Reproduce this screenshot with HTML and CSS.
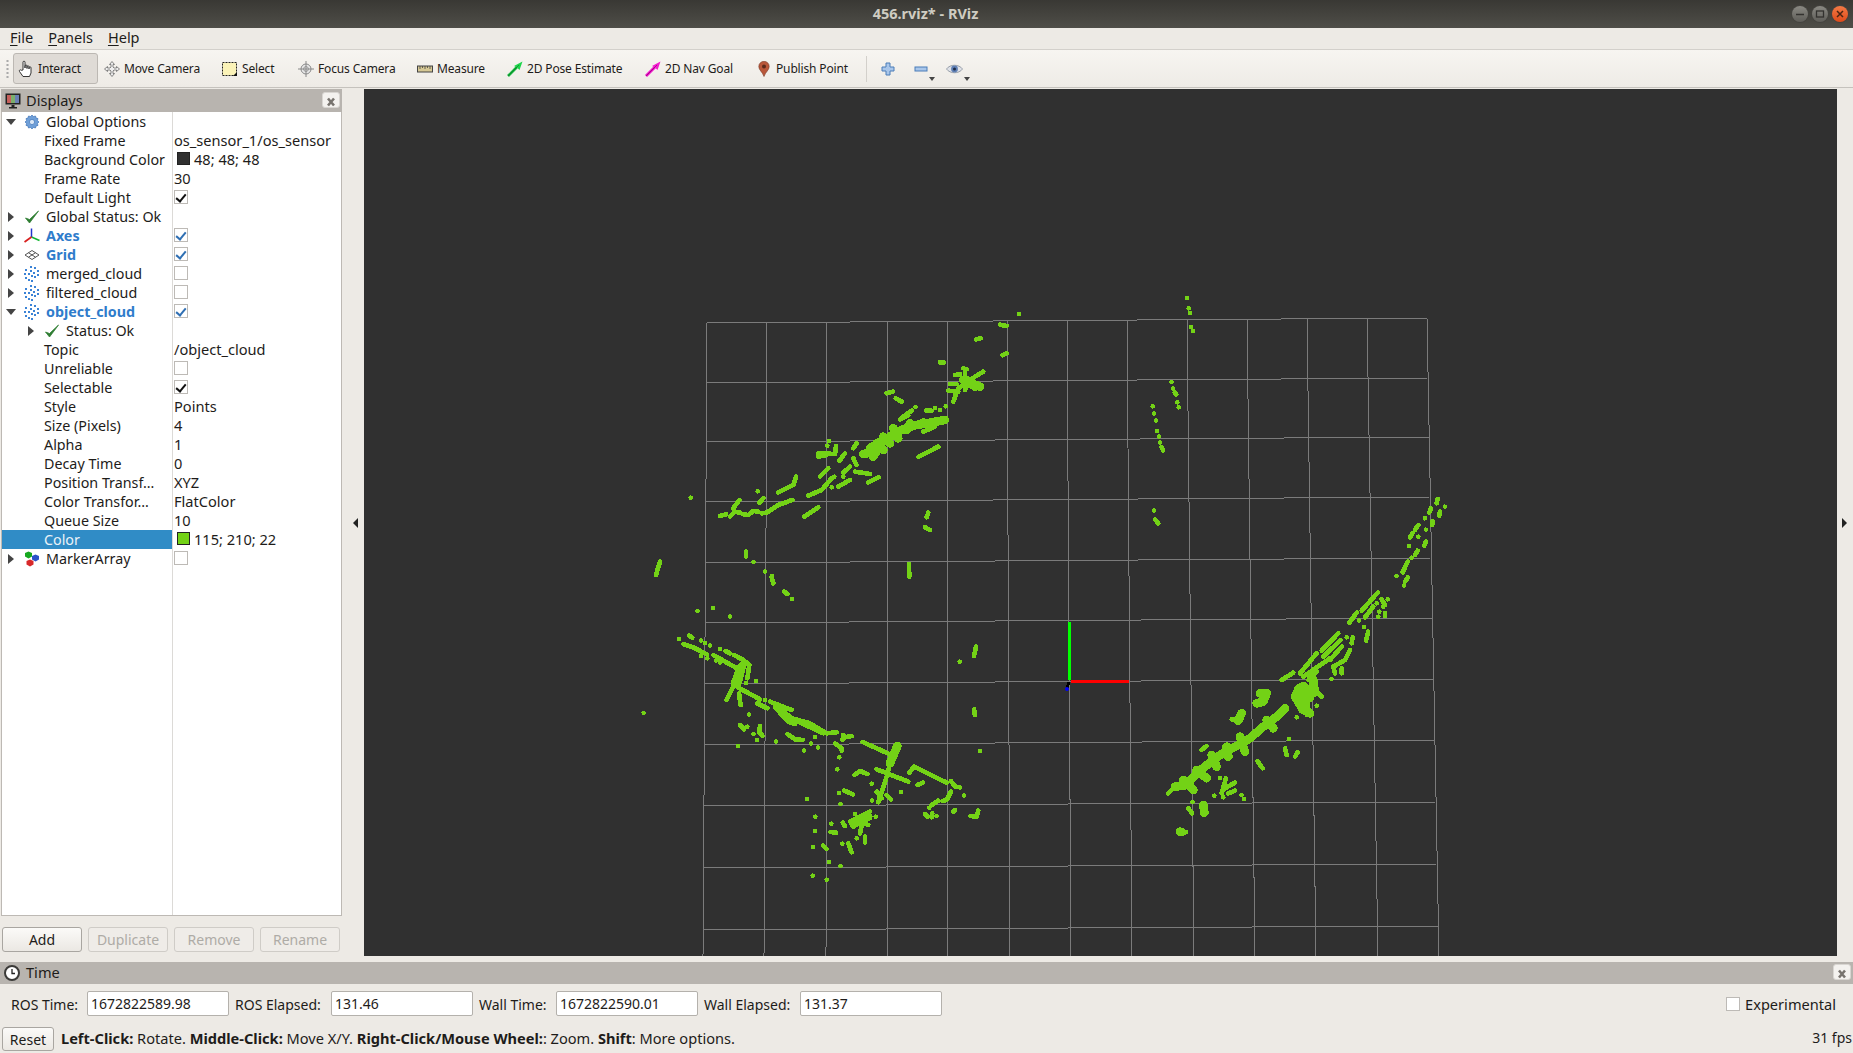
FILE: index.html
```html
<!DOCTYPE html>
<html lang="en">
<head>
  <meta charset="UTF-8">
  <title>456.rviz* - RViz</title>
  <link rel="stylesheet" href="styles.css">
</head>
<body>

  <!-- shared icons -->
  <svg class="sprites" width="0" height="0">
    <symbol id="i-check" viewBox="0 0 16 16"><path d="M1.5 9 L5.5 14 L14.5 2 L5.5 10.5 Z" fill="#2f7d32" stroke="#2f7d32" stroke-width=".8"/></symbol>
    <symbol id="i-cloud" viewBox="0 0 16 16">
      <g fill="#3b83d6">
        <rect x="6" y="0" width="2" height="2"/><rect x="10" y="1" width="2" height="2"/><rect x="1" y="3" width="2" height="2"/>
        <rect x="6" y="4" width="2" height="2"/><rect x="13" y="4" width="2" height="2"/><rect x="0" y="7" width="2" height="2"/>
        <rect x="4" y="7" width="2" height="2"/><rect x="9" y="6" width="2" height="2"/><rect x="13" y="8" width="2" height="2"/>
        <rect x="1" y="11" width="2" height="2"/><rect x="7" y="9" width="2" height="2"/><rect x="10" y="10" width="2" height="2"/>
        <rect x="4" y="13" width="2" height="2"/><rect x="7" y="14" width="2" height="2"/>
      </g>
    </symbol>
    <symbol id="i-close" viewBox="0 0 16 14"><path d="M5 3.5 L11 10.5 M11 3.5 L5 10.5" stroke="#77736e" stroke-width="2.6" fill="none"/></symbol>
  </svg>

  <div class="titlebar">
    <span class="title">456.rviz* - RViz</span>
    <div class="winbtns">
      <span class="winbtn"><svg width="16" height="16" viewBox="0 0 16 16"><path d="M4 8.5 H12" stroke="#33322f" stroke-width="1.5"/></svg></span>
      <span class="winbtn"><svg width="16" height="16" viewBox="0 0 16 16"><rect x="4.5" y="5" width="7" height="6" fill="none" stroke="#33322f" stroke-width="1.3"/></svg></span>
      <span class="winbtn winbtn-close"><svg width="16" height="16" viewBox="0 0 16 16"><path d="M5 5 L11 11 M11 5 L5 11" stroke="#4a2413" stroke-width="1.5"/></svg></span>
    </div>
  </div>

  <div class="menubar">
    <span class="menu"><u>F</u>ile</span>
    <span class="menu"><u>P</u>anels</span>
    <span class="menu"><u>H</u>elp</span>
  </div>

  <div class="toolbar">
    <span class="grip"></span>
    <span class="tool tool-active">
      <svg class="ico ico-hand" viewBox="0 0 16 18"><path d="M5 10 V2.2 a1 1 0 0 1 2 0 V8 V6 a1 1 0 0 1 2 0 V8.5 V6.8 a1 1 0 0 1 2 0 V9 V7.8 a1 1 0 0 1 2 0 V13 L11.5 16.5 H5 L1.5 11.5 a1 1 0 0 1 1.6 -1.2 Z" fill="#fff" stroke="#222" stroke-width=".9"/></svg>
      Interact
    </span>
    <span class="tool tool-move">
      <svg class="ico" viewBox="0 0 16 16"><path d="M8 .5 L10.5 3.5 H9 V6 L10 7 H12.5 V5.5 L15.5 8 L12.5 10.5 V9 H10 L9 10 V12.5 H10.5 L8 15.5 L5.5 12.5 H7 V10 L6 9 H3.5 V10.5 L.5 8 L3.5 5.5 V7 H6 L7 6 V3.5 H5.5 Z" fill="#eee" stroke="#777" stroke-width=".9"/></svg>
      Move Camera
    </span>
    <span class="tool tool-select">
      <svg class="ico" viewBox="0 0 16 16"><rect x=".5" y="1.5" width="14" height="13" fill="#fbf3b8" stroke="#222" stroke-dasharray="2 1"/><path d="M11 15 H15 V11 Z" fill="#111"/></svg>
      Select
    </span>
    <span class="tool tool-focus">
      <svg class="ico" viewBox="0 0 16 16"><circle cx="8" cy="8" r="5" fill="#e9e9e9" stroke="#888"/><circle cx="8" cy="8" r="2.4" fill="none" stroke="#999"/><path d="M8 0 V16 M0 8 H16" stroke="#888"/></svg>
      Focus Camera
    </span>
    <span class="tool tool-measure">
      <svg class="ico" viewBox="0 0 16 16"><rect x=".5" y="5" width="15" height="6" fill="#d6c894" stroke="#444"/><path d="M3 5 V8 M5.5 5 V7 M8 5 V8 M10.5 5 V7 M13 5 V8" stroke="#444" stroke-width=".8"/></svg>
      Measure
    </span>
    <span class="tool tool-pose">
      <svg class="ico" viewBox="0 0 16 16"><path d="M1 15 L10 6" stroke="#14b53c" stroke-width="2.6"/><path d="M15.5 .5 L12.5 9 L10 6.5 L7 5 Z" fill="#1dd64a"/><path d="M1 15 L12 4" stroke="#0b6d22" stroke-width=".6"/></svg>
      2D Pose Estimate
    </span>
    <span class="tool tool-nav">
      <svg class="ico" viewBox="0 0 16 16"><path d="M1 15 L10 6" stroke="#ee10c8" stroke-width="2.8"/><path d="M15.5 .5 L12.5 9 L10 6.5 L7 5 Z" fill="#f31ccf"/><path d="M1 15 L12 4" stroke="#7a0a66" stroke-width=".6"/></svg>
      2D Nav Goal
    </span>
    <span class="tool tool-point">
      <svg class="ico ico-pin" viewBox="0 0 12 16"><path d="M6 15.5 C4.5 11 .8 9 .8 5.5 a5.2 5.2 0 0 1 10.4 0 C11.2 9 7.5 11 6 15.5 Z" fill="#b9573a" stroke="#7a3a28" stroke-width=".6"/><circle cx="6" cy="5.5" r="2" fill="#5a2a1c"/></svg>
      Publish Point
    </span>
    <span class="tool-sep"></span>
    <span class="tool-btn tool-plus">
      <svg width="14" height="14" viewBox="0 0 14 14"><path d="M5 1 H9 V5 H13 V9 H9 V13 H5 V9 H1 V5 H5 Z" fill="#a9c6ea" stroke="#4a7cb8"/></svg>
    </span>
    <span class="tool-btn tool-minus">
      <svg width="14" height="14" viewBox="0 0 14 14"><rect x="1" y="5" width="12" height="4" fill="#a9c6ea" stroke="#4a7cb8"/></svg>
      <i class="caret"></i>
    </span>
    <span class="tool-btn tool-eye">
      <svg width="17" height="12" viewBox="0 0 17 12"><path d="M.5 6 C4 1 13 1 16.5 6 C13 11 4 11 .5 6 Z" fill="#dfe2e8" stroke="#9aa0aa"/><circle cx="8.5" cy="6" r="3.4" fill="#5f7fb4"/><circle cx="8.5" cy="6" r="1.5" fill="#1e2c48"/></svg>
      <i class="caret"></i>
    </span>
  </div>

  <div class="workspace">
    <div class="dock">
      <div class="panel-head">
        <svg class="ico" viewBox="0 0 16 16"><rect x=".5" y=".5" width="15" height="11" fill="#222"/><rect x="2" y="2" width="4" height="8" fill="#c6605c"/><rect x="6" y="2" width="4" height="8" fill="#7cae6c"/><rect x="10" y="2" width="4" height="8" fill="#6a7fb4"/><path d="M6.5 12 H9.5 V14 H12 V15.5 H4 V14 H6.5 Z" fill="#222"/></svg>
        <span class="panel-title">Displays</span>
        <span class="panel-close"><svg width="16" height="14"><use href="#i-close"/></svg></span>
      </div>

      <div class="tree">
        <div class="row">
          <span class="name"><i class="arrow arrow-open"></i>
            <svg class="ico" viewBox="0 0 16 16"><path d="M8 1 L9.4 2.6 L11.5 2 L12 4 L14 4.6 L13.4 6.6 L15 8 L13.4 9.4 L14 11.4 L12 12 L11.5 14 L9.4 13.4 L8 15 L6.6 13.4 L4.5 14 L4 12 L2 11.4 L2.6 9.4 L1 8 L2.6 6.6 L2 4.6 L4 4 L4.5 2 L6.6 2.6 Z" fill="#6f9fd8" stroke="#3f74b8" stroke-width=".7"/><circle cx="8" cy="8" r="2.6" fill="#dbe8f7" stroke="#3f74b8" stroke-width=".7"/></svg>
            <span class="label">Global Options</span></span>
          <span class="value"></span>
        </div>
        <div class="row"><span class="name child">Fixed Frame</span><span class="value">os_sensor_1/os_sensor</span></div>
        <div class="row"><span class="name child">Background Color</span><span class="value"><i class="swatch swatch-bg"></i>48; 48; 48</span></div>
        <div class="row"><span class="name child">Frame Rate</span><span class="value">30</span></div>
        <div class="row"><span class="name child">Default Light</span><span class="value"><i class="box box-on"></i></span></div>
        <div class="row">
          <span class="name"><i class="arrow"></i><svg class="ico"><use href="#i-check"/></svg><span class="label">Global Status: Ok</span></span>
          <span class="value"></span>
        </div>
        <div class="row">
          <span class="name"><i class="arrow"></i>
            <svg class="ico" viewBox="0 0 16 16"><path d="M7.5 9 V0.5" stroke="#2233cc" stroke-width="1.5"/><path d="M7.5 9 L15.5 12.5" stroke="#12b530" stroke-width="1.5"/><path d="M7.5 9 L.5 14" stroke="#d8201f" stroke-width="1.7"/></svg>
            <span class="label label-on">Axes</span></span>
          <span class="value"><i class="box box-blue"></i></span>
        </div>
        <div class="row">
          <span class="name"><i class="arrow"></i>
            <svg class="ico" viewBox="0 0 16 16"><path d="M8 3.5 L15 8 L8 12.5 L1 8 Z M4.5 5.7 L11.5 10.2 M11.5 5.7 L4.5 10.2" fill="none" stroke="#555" stroke-width="1"/></svg>
            <span class="label label-on">Grid</span></span>
          <span class="value"><i class="box box-blue"></i></span>
        </div>
        <div class="row">
          <span class="name"><i class="arrow"></i><svg class="ico"><use href="#i-cloud"/></svg><span class="label">merged_cloud</span></span>
          <span class="value"><i class="box"></i></span>
        </div>
        <div class="row">
          <span class="name"><i class="arrow"></i><svg class="ico"><use href="#i-cloud"/></svg><span class="label">filtered_cloud</span></span>
          <span class="value"><i class="box"></i></span>
        </div>
        <div class="row">
          <span class="name"><i class="arrow arrow-open"></i><svg class="ico"><use href="#i-cloud"/></svg><span class="label label-on">object_cloud</span></span>
          <span class="value"><i class="box box-blue"></i></span>
        </div>
        <div class="row">
          <span class="name nested"><i class="arrow"></i><svg class="ico"><use href="#i-check"/></svg><span class="label">Status: Ok</span></span>
          <span class="value"></span>
        </div>
        <div class="row"><span class="name child">Topic</span><span class="value">/object_cloud</span></div>
        <div class="row"><span class="name child">Unreliable</span><span class="value"><i class="box"></i></span></div>
        <div class="row"><span class="name child">Selectable</span><span class="value"><i class="box box-on"></i></span></div>
        <div class="row"><span class="name child">Style</span><span class="value">Points</span></div>
        <div class="row"><span class="name child">Size (Pixels)</span><span class="value">4</span></div>
        <div class="row"><span class="name child">Alpha</span><span class="value">1</span></div>
        <div class="row"><span class="name child">Decay Time</span><span class="value">0</span></div>
        <div class="row"><span class="name child">Position Transf…</span><span class="value">XYZ</span></div>
        <div class="row"><span class="name child">Color Transfor…</span><span class="value">FlatColor</span></div>
        <div class="row"><span class="name child">Queue Size</span><span class="value">10</span></div>
        <div class="row"><span class="name child name-selected">Color</span><span class="value"><i class="swatch swatch-green"></i>115; 210; 22</span></div>
        <div class="row">
          <span class="name"><i class="arrow"></i>
            <svg class="ico" viewBox="0 0 16 16"><path d="M4.5 .5 L8 2 V5.5 L4.5 7.5 L1 5.5 V2 Z" fill="#17a81f"/><path d="M11.5 3.5 L15 5 V8.5 L11.5 10.5 L8 8.5 V5 Z" fill="#2a52c8"/><path d="M6 8.5 L9.5 10 V13.5 L6 15.5 L2.5 13.5 V10 Z" fill="#d8282a"/></svg>
            <span class="label">MarkerArray</span></span>
          <span class="value"><i class="box"></i></span>
        </div>
      </div>

      <div class="dock-btns">
        <button class="btn">Add</button>
        <button class="btn" disabled>Duplicate</button>
        <button class="btn" disabled>Remove</button>
        <button class="btn" disabled>Rename</button>
      </div>
    </div>

    <div class="splitter"><i class="side-arrow side-left"></i></div>

    <div class="viewport">
      <svg class="scene" width="1473" height="867" viewBox="364 89 1473 867">
        <g class="grid">
          <path d="M707 323 L703 956 M767 322 L764 956 M827 322 L826 956 M887 321 L887 956 M947 321 L948 956 M1007 320 L1010 956 M1067 320 L1071 956 M1127 320 L1132 956 M1187 319 L1194 956 M1247 319 L1255 956 M1307 319 L1316 956 M1367 318 L1378 956 M1427 318 L1439 956"/>
          <path d="M707 323 L1427 318 M707 383 L1427 378 M707 442 L1429 437 M706 502 L1429 497 M706 563 L1430 558 M705 623 L1432 618 M705 684 L1433 679 M705 745 L1434 740 M704 806 L1435 802 M704 868 L1436 864 M703 930 L1438 926"/>
        </g>

        <g class="pts" transform="translate(650 280) scale(.3333)">
          <path d="M1107 102h0 M1050 134L1070 138 M978 178L992 175 M1058 226L1070 220 M870 247L882 248"/>
          <path d="M940 265L950 268 M945 270L945 290 M915 285L930 283 M1000 275L975 290L955 305L925 325L910 365 M900 312L920 312 M895 332L925 335 M960 300L945 330"/>
          <path class="thick" d="M950 300L975 320 M940 300L990 320"/>
          <path d="M710 340L728 335 M737 355L755 365 M797 381h0 M828 392L845 392 M855 384h0 M870 390h0 M887 379h0 M760 410L785 392 M750 418L775 405 M820 455L840 447"/>
          <path class="thick" d="M885 420L840 428L790 437L750 452L700 482L670 530 M660 505L700 480 M640 522L680 515 M820 428L850 436 M780 430L770 450 M730 445L745 475 M700 470L720 490 M680 490L700 510"/>
          <path d="M805 531L865 500 M620 490L610 505 M537 483h0 M532 497h0 M505 520L555 522L558 498 M505 530L530 525 M585 520L568 543 M610 535L620 555 M600 560L580 578 M615 575L660 582 M655 607L686 592 M600 600L565 620 M580 590h0 M553 590h0 M545 622h0 M535 565L510 590 M545 595L515 630L475 647"/>
          <path d="M438 590L430 615L385 637 M323 634h0 M340 655L328 668 M268 660L250 685 M427 660L385 675L350 698L335 700 M325 695L310 693L295 705L280 703 M270 698L255 695L240 710 M228 703L210 708 M505 682L463 710 M122 653h0"/>
          <path d="M288 815L288 830 M311 846h0 M345 875h0 M366 888v10 M30 845L18 885 M835 698L830 712 M825 742L840 750 M777 852L778 890"/>
        </g>

        <g class="pts" transform="translate(630 550) scale(.3333)">
          <path d="M425 82L430 100 M462 124L472 132 M486 147h0 M203 183h0 M249 175h0 M300 200h0 M41 489h0"/>
        </g>

        <g class="pts" transform="translate(660 620) scale(.3333)">
          <path d="M57 57h0 M87 47L97 53 M123 62h0 M135 70h0 M150 77h0 M70 72L100 82L140 103 M180 87h0 M197 93L210 100 M222 105L250 120L268 135L262 175 M123 108h0 M142 115h0 M168 122h0 M180 128h0 M160 105L240 150"/>
          <path class="thick" d="M240 150L225 190 M245 140L232 190"/>
          <path d="M225 190L200 240 M258 190h0 M288 183h0 M237 220L242 255 M235 203L300 238 M315 240h0 M292 250L322 265 M330 245L395 270 M345 262L385 305L405 312 M360 265L395 295L450 310L500 340L530 337 M415 305L490 340"/>
          <path d="M267 284h0 M240 315L252 328 M262 320h0 M300 318L297 335L308 348 M281 342h0 M291 360h0 M348 365h0 M382 342L405 358L428 360 M465 351h0 M453 371h0 M474 383h0 M432 392h0 M234 378h0"/>
          <path d="M550 345L548 360 M575 348L555 352 M525 370L545 385L545 392 M538 412h0 M532 448h0 M608 366L690 403 M650 448L745 485 M650 515L665 535 M680 525L692 538"/>
          <path class="thick" d="M712 378L690 430"/>
          <path d="M690 430L680 470L655 547 M583 465L600 453L622 462 M635 491h0 M723 516h0 M636 542h0 M537 520h0 M553 512L578 523 M542 552h0 M441 537h0 M773 495L788 488 M748 458L762 440L860 488 M873 483L885 500L900 502 M912 527h0 M873 515L860 540L848 543 M835 542L815 555 M808 563h0 M795 582L803 590 M817 580L815 592 M830 588h0 M885 570L880 575 M955 572L950 590L932 588"/>
          <path class="thick" d="M580 610L625 590"/>
          <path d="M585 582h0 M570 605L630 575 M580 620L630 590 M600 640L610 590 M590 600L625 615 M647 590h0 M590 655h0 M615 650L615 668 M548 608L555 618 M514 611h0 M466 590h0 M465 633h0 M512 636L528 638 M547 671h0 M565 670L575 697 M460 681h0 M490 677L500 687 M508 726h0 M542 738h0 M458 767h0 M500 779h0"/>
          <path d="M948 80L942 108 M899 125h0 M942 268L945 285 M961 393h0"/>
        </g>

        <g class="pts" transform="translate(1100 285) scale(.3333)">
          <path d="M261 39h0 M266 70h0 M270 85h0 M273 126h0 M279 139h0 M215 291h0 M219 311h0 M224 323L229 328 M232 352h0 M236 367h0 M158 364h0 M162 386h0 M168 407h0 M172 438h0 M177 455h0 M180 473h0 M185 487L189 496"/>
        </g>

        <g class="pts" transform="translate(1100 480) scale(.3333)">
          <path d="M162 92h0 M165 118L175 130"/>
          <path d="M1013 57L1010 70 M1035 80h0 M993 85L988 97 M1020 95L1018 107 M975 115h0 M998 123L997 135 M955 135L945 150 M978 149h0 M937 160L930 173 M955 170h0 M978 185L973 197 M928 198h0 M953 212L945 225 M935 233h0 M923 245L908 277 M890 288h0 M923 293L915 305 M912 317h0"/>
          <path d="M833 338L785 392 M820 380L795 412 M770 398L748 428 M777 422h0 M845 358L855 375 M863 358h0 M830 370h0 M850 380h0 M838 395h0 M855 400v8 M835 410h0 M792 442h0 M805 455L798 482 M740 472h0 M758 472L755 490 M715 460L665 512 M722 480L670 530 M725 500L690 540 M650 520L600 580 M690 535L610 590 M545 600L580 578 M750 510L735 540L700 560L705 580 M725 565v15 M695 597h0 M650 575L625 600"/>
          <path class="fat" d="M610 625L612 685 M600 630L625 650"/>
          <path class="thick" d="M590 640L625 640 M600 670L630 650 M480 640L500 640L490 665L470 670 M425 700L415 722 M585 650L610 690 M640 600L640 640 M620 690L630 700"/>
          <path d="M652 627h0 M665 650L655 640 M650 677h0 M590 712h0 M622 705h0 M415 722L395 718"/>
          <path class="thick" d="M555 685L530 710L490 740L450 775L415 795L375 815L340 840L290 880L260 915L225 920 M500 720L520 745 M420 770L435 815 M380 800L385 830 M335 825L350 860 M290 870L320 895 M250 900L280 930"/>
          <path d="M225 920L205 940 M320 798L305 810 M567 777h0 M555 805L560 825 M593 817L585 830 M472 843L488 865 M360 895h0 M378 895L365 940 M405 908L375 925 M405 932L385 940 M370 952h0 M343 947h0 M425 945h0 M433 957h0 M278 966h0 M265 985L276 1000"/>
          <path class="thick" d="M310 975L313 998 M240 1055L244 1056"/>
          <path d="M244 1057L258 1057"/>
        </g>

        <path class="axis-y" d="M1069 622 V680"/>
        <path class="axis-x" d="M1071 681.5 H1129"/>
        <path class="axis-o" d="M1069 682 L1067 688"/>
        <circle class="axis-z" cx="1067" cy="689" r="2"/>
      </svg>
    </div>

    <div class="side-strip"><i class="side-arrow side-right"></i></div>
  </div>

  <div class="time-panel">
    <div class="panel-head time-head">
      <svg class="ico" viewBox="0 0 16 16"><circle cx="8" cy="8" r="7" fill="#fff" stroke="#3b3a38" stroke-width="2"/><path d="M8 4 V8.5 H11" fill="none" stroke="#222" stroke-width="1.3"/></svg>
      <span class="panel-title">Time</span>
      <span class="panel-close"><svg width="16" height="14"><use href="#i-close"/></svg></span>
    </div>
    <div class="time-row">
      <label class="t-label t-ros">ROS Time:</label><span class="field">1672822589.98</span>
      <label class="t-label t-ros-el">ROS Elapsed:</label><span class="field">131.46</span>
      <label class="t-label t-wall">Wall Time:</label><span class="field">1672822590.01</span>
      <label class="t-label t-wall-el">Wall Elapsed:</label><span class="field">131.37</span>
      <span class="experimental"><i class="box"></i>Experimental</span>
    </div>
  </div>

  <div class="statusbar">
    <button class="btn btn-reset">Reset</button>
    <span class="hint"><b>Left-Click:</b> Rotate. <b>Middle-Click:</b> Move X/Y. <b>Right-Click/Mouse Wheel:</b>: Zoom. <b>Shift</b>: More options.</span>
    <span class="fps">31 fps</span>
  </div>

</body>
</html>
```

FILE: styles.css
```css
body {
  margin: 0;
  width: 1853px;
  height: 1053px;
  overflow: hidden;
  display: flex;
  flex-direction: column;
  background: #edeae5;
  color: #1e1c1a;
  font-family: "Noto Sans", sans-serif;
  font-size: 13.5px;
}
.sprites {
  position: absolute;
}
.ico {
  width: 16px;
  height: 16px;
  flex: none;
}

/* window title */
.titlebar {
  height: 28px;
  flex: none;
  display: flex;
  align-items: center;
  justify-content: center;
  position: relative;
  background: linear-gradient(#393834, #4f4e48);
}
.title {
  color: #cfccc2;
  font-weight: 700;
  font-size: 14.5px;
  margin-right: 2px;
  margin-bottom: 2px;
}
.winbtns {
  position: absolute;
  right: 5px;
  top: 6px;
  display: flex;
  gap: 4px;
}
.winbtn {
  width: 16px;
  height: 16px;
  border-radius: 50%;
  background: linear-gradient(#8a8983, #5e5d58);
  box-shadow: 0 0 0 1px #44433f;
  display: block;
}
.winbtn-close {
  background: linear-gradient(#f47a45, #dd4a1a);
}

/* menu */
.menubar {
  height: 21px;
  flex: none;
  display: flex;
  align-items: center;
  gap: 15px;
  padding-left: 10px;
  border-bottom: 1px solid #d3d0cb;
  font-size: 14.5px;
}
.menu {
  margin-bottom: 3px;
}
.menu u {
  text-underline-offset: 2px;
}

/* toolbar */
.toolbar {
  height: 37px;
  flex: none;
  display: flex;
  align-items: center;
  position: relative;
  background: linear-gradient(#f7f5f1, #eeebe6);
  border-bottom: 1px solid #c5c2bd;
  font-size: 12px;
  letter-spacing: -.15px;
}
.grip {
  width: 3px;
  height: 20px;
  margin: 0 4px 0 6px;
  background: radial-gradient(circle, #aaa 40%, transparent 50%) 0 0 / 3px 4px;
}
.tool {
  display: flex;
  align-items: center;
  gap: 4px;
  height: 31px;
  box-sizing: border-box;
  padding-left: 7px;
  white-space: nowrap;
}
.tool-active {
  width: 85px;
  padding-left: 4px;
  background: #dfdbd6;
  border: 1px solid #bcb8b3;
  border-radius: 3px;
}
.ico-hand {
  height: 20px;
}
.tool-move { width: 117px; padding-left: 6px; }
.tool-select { width: 77px; padding-left: 7px; }
.tool-focus { width: 119px; margin-left: -1px; }
.tool-measure { width: 90px; }
.tool-pose { width: 138px; }
.tool-nav { width: 113px; }
.tool-point { width: 115px; }
.ico-pin {
  width: 12px;
  margin-right: 2px;
}
.tool-sep {
  width: 1px;
  height: 26px;
  background: #d3d0cb;
  margin: 0 14px 0 0;
}
.tool-btn {
  position: relative;
  display: flex;
  align-items: center;
  height: 16px;
}
.tool-minus { margin-left: 19px; }
.tool-eye { margin-left: 18px; }
.caret {
  position: absolute;
  right: -7px;
  bottom: -4px;
  border: 3px solid transparent;
  border-top: 4px solid #444;
  border-bottom: 0;
}

/* main area */
.workspace {
  height: 867px;
  margin-top: 1px;
  flex: none;
  display: flex;
}
.dock {
  width: 341px;
  margin-left: 1px;
  flex: none;
  display: flex;
  flex-direction: column;
}
.panel-head {
  height: 23px;
  flex: none;
  display: flex;
  align-items: center;
  gap: 5px;
  padding-left: 4px;
  background: #b8b4af;
  font-size: 14.6px;
  box-sizing: border-box;
}
.panel-title {
  flex: 1;
  margin-bottom: 2px;
}
.panel-close {
  width: 16px;
  height: 14px;
  margin-right: 2px;
  margin-bottom: 2px;
  background: #f4f2ef;
  border: 1px solid #d9d6d2;
  border-radius: 3px;
  display: block;
}
.tree {
  height: 804px;
  box-sizing: border-box;
  border: 1px solid #bdb9b4;
  border-top: 0;
  background: linear-gradient(#dcdad7, #dcdad7) 170px 0 / 1px 100% no-repeat #fff;
  font-size: 14.3px;
}
.row {
  height: 19px;
  display: flex;
  align-items: center;
}
.name {
  width: 170px;
  height: 19px;
  flex: none;
  display: flex;
  align-items: center;
  white-space: nowrap;
  padding-left: 5px;
  box-sizing: border-box;
}
.name .ico {
  margin: 0 6px 0 10px;
}
.child {
  padding-left: 42px;
}
.nested {
  padding-left: 25px;
}
.name-selected {
  background: #308cc6;
  color: #e8f2f8;
}
.label-on {
  color: #2f7ccb;
  font-weight: 700;
}
.arrow {
  width: 0;
  height: 0;
  flex: none;
  border-left: 6px solid #444;
  border-top: 5px solid transparent;
  border-bottom: 5px solid transparent;
  margin-left: 1px;
}
.arrow-open {
  margin-left: -1px;
  margin-right: -2px;
  border-top: 6px solid #444;
  border-left: 5px solid transparent;
  border-right: 5px solid transparent;
  border-bottom: 0;
}
.value {
  padding-left: 2px;
  margin-bottom: 2px;
  display: flex;
  align-items: center;
  white-space: nowrap;
  font-size: 14.6px;
}
.box {
  width: 14px;
  height: 14px;
  flex: none;
  box-sizing: border-box;
  background: #fff;
  border: 1px solid #bdbab6;
  position: relative;
  display: block;
}
.box-on::after,
.box-blue::after {
  content: "";
  position: absolute;
  left: 3px;
  top: 1px;
  width: 4px;
  height: 8px;
  border: solid #111;
  border-width: 0 2px 2px 0;
  transform: rotate(40deg);
}
.box-blue::after {
  border-color: #2f6fb3;
}
.swatch {
  width: 13px;
  height: 13px;
  box-sizing: border-box;
  border: 1px solid #222;
  margin: 0 4px 0 3px;
  flex: none;
}
.swatch-bg { background: #303030; }
.swatch-green { background: #73d216; }
.dock-btns {
  display: flex;
  gap: 6px;
  padding: 11px 1px 0;
}
.btn {
  width: 80px;
  height: 25px;
  padding: 0;
  font: inherit;
  font-size: 14px;
  color: #1e1c1a;
  background: linear-gradient(#fbfaf8, #ebe8e3);
  border: 1px solid #a9a6a1;
  border-radius: 3px;
}
.btn:disabled {
  color: #aeaba6;
  border-color: #cfccc7;
  background: #efece8;
}
.splitter {
  width: 22px;
  flex: none;
  display: flex;
  align-items: center;
  padding-left: 11px;
  box-sizing: border-box;
}
.side-arrow {
  border-top: 5px solid transparent;
  border-bottom: 5px solid transparent;
  display: block;
}
.side-left { border-right: 5px solid #222; }
.side-right { border-left: 5px solid #222; }

/* 3d view */
.viewport {
  width: 1473px;
  flex: none;
  background: #303030;
}
.scene {
  display: block;
}
.grid path {
  fill: none;
  stroke: #7b7b7b;
  stroke-width: 1;
  shape-rendering: crispEdges;
}
.pts path {
  fill: none;
  stroke: #73d216;
  stroke-width: 14;
  stroke-linecap: round;
  stroke-linejoin: round;
  shape-rendering: crispEdges;
}
.pts path.thick {
  stroke-width: 26;
}
.pts path.fat {
  stroke-width: 38;
}
.axis-y,
.axis-x,
.axis-o {
  fill: none;
  shape-rendering: crispEdges;
}
.axis-y { stroke: #00ff00; stroke-width: 3; }
.axis-x { stroke: #ff0000; stroke-width: 3; }
.axis-o { stroke: #000; stroke-width: 3; }
.axis-z { fill: #0000ff; }
.side-strip {
  flex: 1;
  display: flex;
  align-items: center;
  padding-left: 5px;
}

/* time panel */
.time-panel {
  margin-top: 6px;
  flex: none;
}
.time-head {
  height: 22px;
  padding-left: 4px;
  gap: 6px;
}
.time-row {
  display: flex;
  align-items: center;
  height: 25px;
  margin-top: 7px;
  font-size: 14px;
  white-space: nowrap;
}
.t-label {
  display: block;
  margin-top: 2px;
}
.t-ros { width: 76px; margin-left: 11px; }
.t-ros-el { width: 96px; margin-left: 6px; }
.t-wall { width: 77px; margin-left: 6px; }
.t-wall-el { width: 96px; margin-left: 6px; }
.field {
  width: 142px;
  height: 25px;
  box-sizing: border-box;
  padding-left: 3px;
  line-height: 24px;
  background: #fff;
  border: 1px solid #b4b1ac;
  border-radius: 2px;
}
.experimental {
  display: flex;
  align-items: center;
  gap: 5px;
  margin-left: auto;
  margin-right: 17px;
  font-size: 14.6px;
}
.statusbar {
  display: flex;
  align-items: center;
  height: 24px;
  margin-top: 11px;
  padding-left: 2px;
  font-size: 14.6px;
  white-space: nowrap;
}
.btn-reset {
  width: 52px;
  height: 24px;
}
.hint {
  margin-left: 7px;
  margin-bottom: 2px;
}
.fps {
  margin-left: auto;
  margin-right: 1px;
  margin-bottom: 4px;
  font-size: 14px;
}
```
